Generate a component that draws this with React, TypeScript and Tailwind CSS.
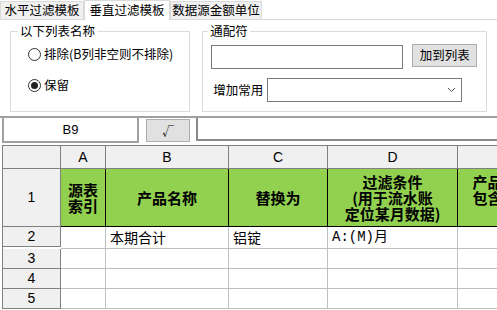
const ui = "font-['Noto_Sans_CJK_SC',sans-serif]";

function Tab({ label, width, active }: { label: string; width: string; active?: boolean }) {
  return (
    <div
      className={
        active
          ? `${width} -mb-px flex h-[20px] items-center justify-center border-x border-t border-[#d9d9d9] bg-white`
          : `${width} flex h-[18px] items-center justify-center border-x border-t border-[#d9d9d9] bg-[#f0f0f0]`
      }
    >
      <span className="text-[12.5px] leading-none">{label}</span>
    </div>
  );
}

function Radio({ label, checked }: { label: string; checked?: boolean }) {
  return (
    <div className="flex h-[20px] items-center gap-[3px]">
      <span className="flex h-[13px] w-[13px] items-center justify-center rounded-full border border-[#333] bg-white">
        {checked && <span className="h-[7px] w-[7px] rounded-full bg-[#222]" />}
      </span>
      <span className="text-[12.5px]">{label}</span>
    </div>
  );
}

const cols = "grid grid-cols-[58px_45px_123px_99px_130px_120px]";
const hdr = "flex items-center justify-center border-r border-b border-[#808080] bg-[#f0f0f0] font-['Liberation_Sans',sans-serif] text-[14px]";
const green = "flex items-center justify-center border-r border-b border-black bg-[#92d050] text-center text-[15px] font-bold leading-[16px]";
const cell = "flex items-center border-r border-b border-[#c0c0c0] bg-white pl-[4px] text-[14px]";

const rows = [
  ["2", "", "本期合计", "铝锭", "A:(M)月", ""],
  ["3", "", "", "", "", ""],
  ["4", "", "", "", "", ""],
  ["5", "", "", "", "", ""],
];

export default function App() {
  return (
    <div className={`h-[310px] w-[497px] overflow-hidden bg-white text-[12px] text-black ${ui}`}>
      <div className="flex h-[20px] items-end border-b border-[#d9d9d9]">
        <Tab label="水平过滤模板" width="w-[84px]" />
        <Tab label="垂直过滤模板" width="w-[86px]" active />
        <Tab label="数据源金额单位" width="w-[92px]" />
      </div>

      <div className="flex h-[98px] gap-[12px] border-b-2 border-[#a0a0a0] px-[10px] pt-[3px]">
        <fieldset className="h-[89px] w-[181px] border border-[#dcdcdc]">
          <legend className="ml-[7px] px-[2px] text-[12.5px] leading-[16px]">以下列表名称</legend>
          <div className="pl-[17px] pt-[5px]">
            <Radio label="排除(B列非空则不排除)" />
            <div className="mt-[11px]">
              <Radio label="保留" checked />
            </div>
          </div>
        </fieldset>

        <fieldset className="h-[89px] w-[286px] border border-[#dcdcdc]">
          <legend className="ml-[5px] px-[2px] text-[12.5px] leading-[16px]">通配符</legend>
          <div className="pl-[8px] pt-[6px]">
            <div className="flex items-start gap-[9px]">
              <div className="h-[24px] w-[192px] border border-[#7a7a7a] bg-white" />
              <button className="-mt-px flex h-[23px] w-[65px] items-center justify-center border border-[#adadad] bg-[#e1e1e1] text-[12.5px]">
                加到列表
              </button>
            </div>
            <div className="mt-[9px] flex items-center">
              <span className="ml-[2px] w-[54px] text-[12.5px]">增加常用</span>
              <div className="flex h-[24px] w-[195px] items-center justify-end border border-[#7a7a7a] bg-white pr-[5px]">
                <svg width="9" height="6" viewBox="0 0 9 6">
                  <polyline points="1,1 4.5,4.5 8,1" fill="none" stroke="#555" strokeWidth="1" />
                </svg>
              </div>
            </div>
          </div>
        </fieldset>
      </div>

      <div className="flex h-[26px] items-start">
        <div className="ml-[2px] flex h-[25px] w-[137px] items-center justify-center border-x-2 border-b-2 border-[#a0a0a0] font-['Liberation_Sans',sans-serif] text-[13px]">
          B9
        </div>
        <button className="ml-[7px] mt-px flex h-[23px] w-[44px] items-center justify-center border border-[#adadad] bg-[#e1e1e1] text-[12px]">
          √
        </button>
        <div className="ml-[6px] h-[23px] flex-1 border-b-2 border-l-2 border-[#8a8a8a] bg-white" />
      </div>

      <div className={`ml-[2px] mt-px w-max border-l border-t border-[#808080] ${cols}`}>
        <div className={`${hdr} h-[23px]`} />
        {["A", "B", "C", "D", "E"].map((c) => (
          <div key={c} className={`${hdr} h-[23px]`}>
            {c}
          </div>
        ))}

        <div className={`${hdr} h-[58px]`}>1</div>
        <div className={green}>
          源表
          <br />
          索引
        </div>
        <div className={green}>产品名称</div>
        <div className={green}>替换为</div>
        <div className={green}>
          过滤条件
          <br />
          (用于流水账
          <br />
          定位某月数据)
        </div>
        <div className={green}>
          产品名称包含
          <br />
          包含的字符串
          <br />
          (可)
        </div>

        {rows.map((r) => (
          <div key={r[0]} className="contents">
            <div className={`${hdr} h-[20px]`}>{r[0]}</div>
            <div className={cell}>{r[1]}</div>
            <div className={cell}>{r[2]}</div>
            <div className={cell}>{r[3]}</div>
            <div className={`${cell} font-['Liberation_Mono','Noto_Sans_CJK_SC',monospace]`}>{r[4]}</div>
            <div className={cell}>{r[5]}</div>
          </div>
        ))}
      </div>
    </div>
  );
}
